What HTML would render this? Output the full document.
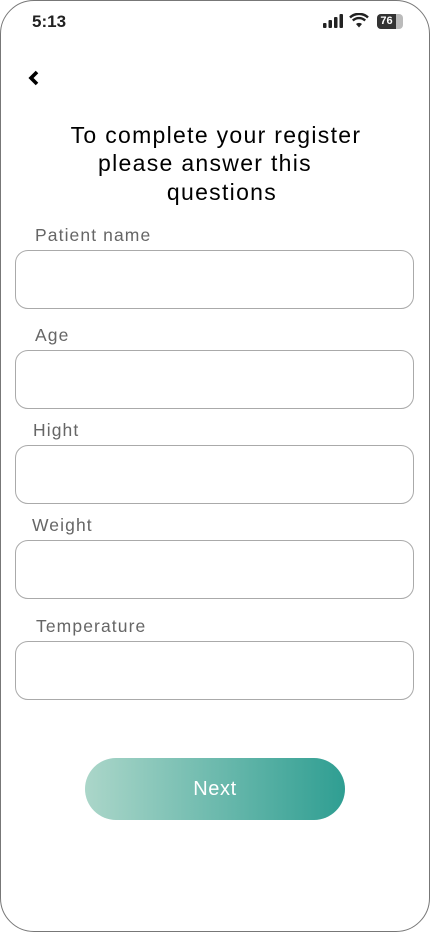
<!DOCTYPE html>
<html><head><meta charset="utf-8"><style>
*{margin:0;padding:0;box-sizing:border-box}
body{width:430px;height:932px;background:#fff;font-family:"Liberation Sans",sans-serif;position:relative;overflow:hidden}
.frame{position:absolute;left:0;top:0;width:430px;height:932px;border:1.5px solid #777;border-radius:34px}
.abs{position:absolute}
.lbl{position:absolute;font-size:17.5px;color:#666;line-height:20px;letter-spacing:1.1px}
.in{position:absolute;left:15px;width:399px;height:59px;border:1px solid #aaa;border-radius:13px}
.t{position:absolute;left:0;width:430px;text-align:center;font-size:23px;color:#000;line-height:28px;letter-spacing:1.3px}
</style></head><body>
<div class="frame"></div>
<div class="abs" style="left:32px;top:12px;font-size:17px;color:#222;font-weight:bold">5:13</div>
<svg class="abs" style="left:323px;top:14px" width="22" height="14"><rect x="0" y="9" width="3.5" height="5" rx="1" fill="#222"/><rect x="5.5" y="6" width="3.5" height="8" rx="1" fill="#222"/><rect x="11" y="3" width="3.5" height="11" rx="1" fill="#222"/><rect x="16.5" y="0" width="3.5" height="14" rx="1" fill="#222"/></svg>
<svg class="abs" style="left:349px;top:13px" width="20" height="15" viewBox="0 0 20 15"><path d="M10 14.5 L13 11 A4.5 4.5 0 0 0 7 11 Z" fill="#222"/><path d="M3.8 7.5 A9 9 0 0 1 16.2 7.5" stroke="#222" stroke-width="2.4" fill="none"/><path d="M1 4.5 A13 13 0 0 1 19 4.5" stroke="#222" stroke-width="2.4" fill="none"/></svg>
<div class="abs" style="left:377px;top:14px;width:26px;height:15px;border-radius:4px;background:#bbb"></div>
<div class="abs" style="left:377px;top:14px;width:19px;height:15px;border-radius:4px 0 0 4px;background:#333;color:#fff;font-size:11px;font-weight:bold;text-align:center;line-height:15px">76</div>
<svg class="abs" style="left:27px;top:69px" width="14" height="18"><path d="M10 3 L4 9 L10 15" stroke="#000" stroke-width="3.6" fill="none"/></svg>
<div class="t" style="top:121px;left:1px">To complete your register</div>
<div class="t" style="top:149px;left:-10px">please answer this</div>
<div class="t" style="top:178px;left:7px">questions</div>
<div class="lbl" style="left:35px;top:225px">Patient name</div>
<div class="in" style="top:250px"></div>
<div class="lbl" style="left:35px;top:325px">Age</div>
<div class="in" style="top:350px"></div>
<div class="lbl" style="left:33px;top:420px">Hight</div>
<div class="in" style="top:445px"></div>
<div class="lbl" style="left:32px;top:515px">Weight</div>
<div class="in" style="top:540px"></div>
<div class="lbl" style="left:36px;top:616px">Temperature</div>
<div class="in" style="top:641px"></div>
<div class="abs" style="left:85px;top:758px;width:260px;height:62px;border-radius:31px;background:linear-gradient(90deg,#abd6c9,#2f9e92);color:#fff;font-size:20px;letter-spacing:0.6px;text-align:center;line-height:62px">Next</div>
</body></html>
